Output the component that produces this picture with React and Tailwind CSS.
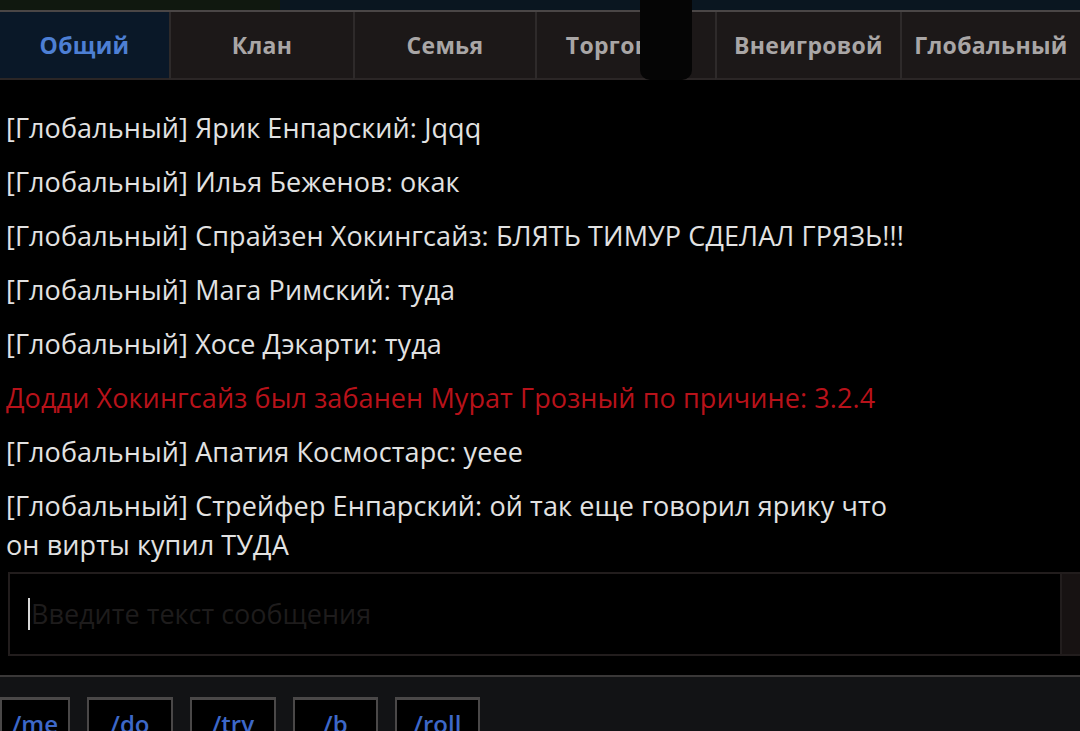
import React from "react";

const tabs = [
  { label: "Общий", w: "w-[169px]", active: true },
  { label: "Клан", w: "w-[184px]" },
  { label: "Семья", w: "w-[182px]" },
  { label: "Торговый", w: "w-[180px]" },
  { label: "Внеигровой", w: "w-[185px]" },
  { label: "Глобальный", w: "flex-1" },
];

const messages = [
  { text: "[Глобальный] Ярик Енпарский: Jqqq" },
  { text: "[Глобальный] Илья Беженов: окак" },
  { text: "[Глобальный] Спрайзен Хокингсайз: БЛЯТЬ ТИМУР СДЕЛАЛ ГРЯЗЬ!!!" },
  { text: "[Глобальный] Мага Римский: туда" },
  { text: "[Глобальный] Хосе Дэкарти: туда" },
  { text: "Додди Хокингсайз был забанен Мурат Грозный по причине: 3.2.4", red: true },
  { text: "[Глобальный] Апатия Космостарс: yeee" },
  { text: "[Глобальный] Стрейфер Енпарский: ой так еще говорил ярику что он вирты купил ТУДА" },
];

const commands = [
  { label: "/me", w: "w-[70px]" },
  { label: "/do", w: "w-[86px]" },
  { label: "/try", w: "w-[86px]" },
  { label: "/b", w: "w-[85px]" },
  { label: "/roll", w: "w-[85px]" },
];

const App = () => {
  return (
    <div className="relative w-[1080px] h-[731px] overflow-hidden bg-black font-['Open_Sans',sans-serif]">
      {/* top strip of the game behind */}
      <div className="flex h-[10px]">
        <div className="w-[280px] bg-[#10180f]" />
        <div className="flex-1 bg-[#0a1620]" />
      </div>

      {/* tabs */}
      <div className="flex h-[70px] border-t-2 border-[#4a4646] bg-[#1c1818]">
        {tabs.map((t, i) => (
          <div
            key={t.label}
            className={`${t.w} flex items-center justify-center border-b-2 border-[#2b2626] text-[23px] font-bold tracking-[0.3px] ${
              i > 0 ? "border-l-2 border-l-[#2e2a2a]" : ""
            } ${t.active ? "bg-[#0a1828] text-[#4d7fd4]" : "text-[#a9a6a6]"}`}
          >
            {t.label}
          </div>
        ))}
      </div>

      {/* obstruction over the tabs */}
      <div className="absolute left-[640px] top-0 w-[52px] h-[80px] rounded-b-[10px] bg-[#050505]" />

      {/* messages */}
      <div className="flex flex-col gap-[15px] pl-[6px] pt-[28px] pr-[175px] h-[492px] text-[27px] leading-[39px] tracking-[0.1px]">
        {messages.map((m, i) => (
          <div key={i} className={m.red ? "text-[#b8121a]" : "text-[#e2e2e2]"}>
            {m.text}
          </div>
        ))}
      </div>

      {/* input */}
      <div className="flex h-[84px] pl-[8px]">
        <div className="flex-1 flex items-center border-2 border-[#221d1d] bg-black pl-[18px]">
          <span className="w-[2px] h-[32px] bg-[#d8d8d8] mr-[1px]" />
          <span className="text-[27px] text-[#1e1c1c]">Введите текст сообщения</span>
        </div>
        <div className="w-[18px] border-y-2 border-[#221d1d] bg-[#171212]" />
      </div>

      {/* bottom bar */}
      <div className="mt-[19px] h-[60px] border-t-2 border-[#3a3838] bg-[#121315]">
        <div className="flex gap-[17px] pt-[20px]">
          {commands.map((c) => (
            <div
              key={c.label}
              className={`${c.w} h-[40px] flex justify-center pt-[12px] border-t-[3px] border-x-2 border-[#4a4848] bg-black text-[#3d68c8] text-[24px] font-semibold leading-none`}
            >
              {c.label}
            </div>
          ))}
        </div>
      </div>
    </div>
  );
};

export default App;
